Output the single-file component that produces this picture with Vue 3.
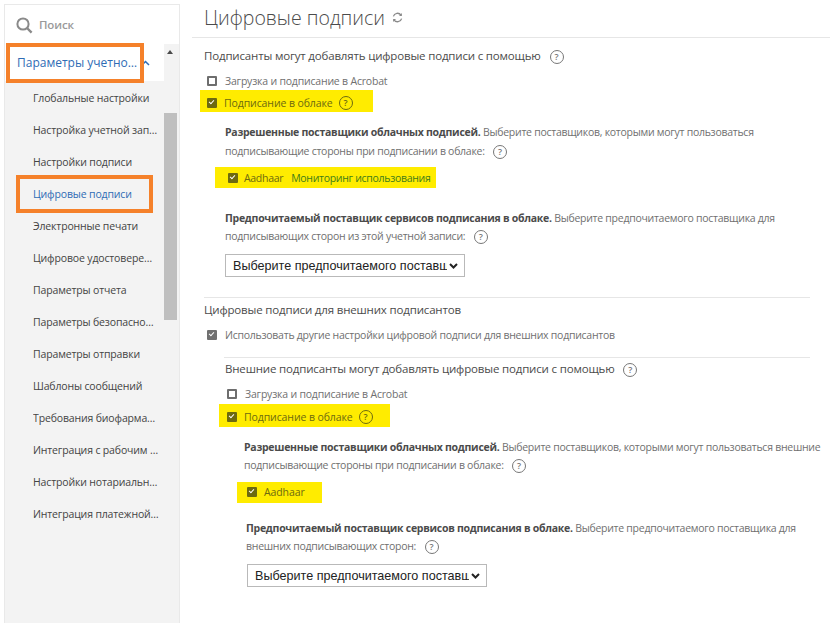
<script setup>
const navItems = [
  { label: 'Глобальные настройки' },
  { label: 'Настройка учетной записи' },
  { label: 'Настройки подписи' },
  { label: 'Цифровые подписи', active: true },
  { label: 'Электронные печати' },
  { label: 'Цифровое удостоверение', w: 125 },
  { label: 'Параметры отчета' },
  { label: 'Параметры безопасности', w: 125 },
  { label: 'Параметры отправки' },
  { label: 'Шаблоны сообщений' },
  { label: 'Требования биофармацевтики', w: 127 },
  { label: 'Интеграция с рабочим процессом' },
  { label: 'Настройки нотариальных услуг' },
  { label: 'Интеграция платежной системы', w: 127 }
]
</script>

<template>
  <div class="page">
    <aside class="sidebar">
      <div class="search">
        <svg class="search-icon" width="17" height="17" viewBox="0 0 17 17" fill="none" stroke="#8a8a8a">
          <circle cx="7" cy="7" r="5.6" stroke-width="2" />
          <path d="M11 11l4.6 4.6" stroke-width="2.4" />
        </svg>
        <span>Поиск</span>
      </div>
      <div class="nav-area">
        <div class="nav-list">
          <div class="nav-head">
            <span class="nav-head-text">Параметры учетной записи</span>
            <svg class="chev" width="9" height="6" viewBox="0 0 9 6" fill="none" stroke="#2f6cb5" stroke-width="1.5"><path d="M1 5l3.5-3.5L8 5" /></svg>
          </div>
          <div v-for="item in navItems" :key="item.label" class="nav-item" :class="{ active: item.active }" :style="item.w ? { width: item.w + 'px' } : null">{{ item.label }}</div>
        </div>
        <div class="scrollbar">
          <div class="scroll-arrow"></div>
          <div class="scroll-thumb"></div>
        </div>
      </div>
      <div class="mark mark-head"></div>
      <div class="mark mark-item"></div>
    </aside>

    <main class="main">
      <header class="title-bar">
        <h1>Цифровые подписи</h1>
        <svg width="11" height="11" viewBox="0 0 11 11" fill="none" stroke="#8a8a8a" stroke-width="1.3">
          <path d="M1.4 4.4A4.2 4.2 0 0 1 9 3.2" />
          <path d="M9.6 6.6A4.2 4.2 0 0 1 2 7.8" />
          <path d="M9.9 1v3H7z" fill="#8a8a8a" stroke="none" />
          <path d="M1.1 10V7h2.9z" fill="#8a8a8a" stroke="none" />
        </svg>
      </header>

      <section class="section">
        <div class="line heading h1st">Подписанты могут добавлять цифровые подписи с помощью <span class="help">?</span></div>
        <label class="line check c1"><span class="box"></span>Загрузка и подписание в Acrobat</label>
        <div class="hl hl-a"><span class="box on"></span>Подписание в облаке <span class="help">?</span></div>
        <p class="para p1"><b>Разрешенные поставщики облачных подписей.</b> Выберите поставщиков, которыми могут пользоваться<br />подписывающие стороны при подписании в облаке: <span class="help">?</span></p>
        <div class="hl hl-b"><span class="box on"></span>Aadhaar<span class="hl-link">Мониторинг использования</span></div>
        <p class="para p2"><b>Предпочитаемый поставщик сервисов подписания в облаке.</b> Выберите предпочитаемого поставщика для<br />подписывающих сторон из этой учетной записи: <span class="help">?</span></p>
        <select class="picker s1"><option>Выберите предпочитаемого поставщика</option></select>
      </section>

      <hr class="rule r1" />

      <section class="section">
        <div class="line heading h2nd">Цифровые подписи для внешних подписантов</div>
        <label class="line check c2"><span class="box on grey"></span>Использовать другие настройки цифровой подписи для внешних подписантов</label>
        <hr class="rule r2" />
        <div class="line heading h3rd">Внешние подписанты могут добавлять цифровые подписи с помощью <span class="help">?</span></div>
        <label class="line check c3"><span class="box"></span>Загрузка и подписание в Acrobat</label>
        <div class="hl hl-c"><span class="box on"></span>Подписание в облаке <span class="help">?</span></div>
        <p class="para p3"><b>Разрешенные поставщики облачных подписей.</b> Выберите поставщиков, которыми могут пользоваться внешние<br />подписывающие стороны при подписании в облаке: <span class="help">?</span></p>
        <div class="hl hl-d"><span class="box on"></span>Aadhaar</div>
        <p class="para p4"><b>Предпочитаемый поставщик сервисов подписания в облаке.</b> Выберите предпочитаемого поставщика для<br />внешних подписывающих сторон: <span class="help">?</span></p>
        <select class="picker s2"><option>Выберите предпочитаемого поставщика</option></select>
      </section>
    </main>
  </div>
</template>

<style scoped>
.page {
  position: relative;
  display: flex;
  width: 830px;
  height: 623px;
  overflow: hidden;
  background: #fff;
  font-family: "Open Sans", "Noto Sans", sans-serif;
  font-size: 10.5px;
  letter-spacing: -0.1px;
  color: #707070;
}
.sidebar {
  position: relative;
  flex: none;
  width: 174px;
  height: 619px;
  margin: 4px 0 0 4px;
  border: 1px solid #e9e9e9;
  border-bottom: 0;
  background: #f3f3f3;
}
.search {
  display: flex;
  align-items: center;
  gap: 6px;
  height: 39px;
  padding-left: 11px;
  background: #fff;
  color: #9a9a9a;
  font-size: 11.5px;
  font-weight: 600;
}
.search-icon { margin-top: 2px; }
.nav-area { display: flex; }
.nav-list { width: 159px; flex: none; }
.nav-head {
  display: flex;
  align-items: center;
  height: 37px;
  margin-bottom: 1px;
  padding-left: 12px;
  background: #fff;
  color: #2f6cb5;
  font-size: 12px;
  letter-spacing: 0;
}
.nav-head-text {
  width: 124px;
  overflow: hidden;
  white-space: nowrap;
  text-overflow: ellipsis;
}
.nav-item {
  height: 32px;
  line-height: 32px;
  margin-left: 28px;
  width: 130px;
  overflow: hidden;
  white-space: nowrap;
  text-overflow: ellipsis;
  color: #444;
  font-size: 10.5px;
  letter-spacing: -0.15px;
}
.nav-item.active { color: #2f6cb5; }
.scrollbar { width: 13px; flex: none; }
.scroll-arrow {
  width: 0;
  height: 0;
  margin: 6px 0 0 3px;
  border: 3.5px solid transparent;
  border-top: 0;
  border-bottom: 4px solid #4a4a4a;
}
.scroll-thumb {
  height: 207px;
  margin-top: 59px;
  background: #bfbfbf;
}
.mark {
  position: absolute;
  box-sizing: border-box;
  border: 4px solid #f5812a;
}
.mark-head { left: 1px; top: 38px; width: 138px; height: 40px; }
.mark-item { left: 11px; top: 170px; width: 137px; height: 38px; }

.main { flex: 1; min-width: 0; }
.title-bar {
  display: flex;
  align-items: center;
  gap: 7px;
  height: 34px;
  padding-bottom: 3px;
  margin-left: 12px;
  padding-left: 12px;
  border-bottom: 1px solid #e6e6e6;
}
h1 {
  margin: 0;
  font-size: 19.5px;
  font-weight: 300;
  letter-spacing: 0;
  color: #4b4b4b;
}
.section { margin-left: 24px; }
.line { display: block; line-height: 18px; white-space: nowrap; }
.heading { font-size: 11.5px; letter-spacing: -0.17px; color: #4b4b4b; }
.check { display: flex; align-items: center; padding-left: 3px; letter-spacing: -0.2px; }
.box {
  flex: none;
  box-sizing: border-box;
  position: relative;
  display: inline-block;
  width: 10px;
  height: 10px;
  margin-right: 8px;
  border: 2px solid #6e6e6e;
  border-radius: 1px;
  background: #fff;
}
.box.on { background: #6d6a10; border-color: #6d6a10; }
.box.grey { background: #707070; border-color: #707070; }
.box.on::after {
  content: "";
  position: absolute;
  left: 1px;
  top: -1px;
  width: 2px;
  height: 4px;
  border: solid #fff;
  border-width: 0 1.4px 1.4px 0;
  transform: rotate(42deg);
}
.help {
  display: inline-block;
  box-sizing: border-box;
  width: 14px;
  height: 14px;
  margin: -4px 0 -4px 6px;
  border: 1.3px solid #777;
  border-radius: 50%;
  color: #777;
  font-size: 9px;
  font-weight: 600;
  line-height: 11.5px;
  letter-spacing: 0;
  text-align: center;
  vertical-align: middle;
}
.hl {
  display: flex;
  align-items: center;
  width: fit-content;
  height: 18px;
  background: #ffec00;
  color: #6d6a10;
  white-space: nowrap;
  box-sizing: content-box;
}
.hl .help { border-color: #6d6a10; color: #6d6a10; margin-top: 0; margin-bottom: 0; }
.hl .box { margin-right: 7px; }
.hl-link { margin-left: 8px; color: #3f7d1a; }
.hl-a { margin: 0 0 0 -4px; padding: 4px 20px 0 7px; }
.hl-b { margin: 6px 0 0 11px; padding: 2px 6px 1px 13px; letter-spacing: -0.3px; }
.hl-b .box { margin-right: 6px; }
.hl-c { margin: 1px 0 0 15px; padding: 4px 17px 1px 8px; }
.hl-d { margin: 8px 0 0 33px; padding: 1px 17px 2px 10px; }
.para {
  margin: 0;
  line-height: 18px;
  letter-spacing: -0.27px;
  white-space: nowrap;
}
.para b { font-weight: 700; color: #4b4b4b; }
.picker {
  display: block;
  box-sizing: border-box;
  width: 240px;
  height: 23px;
  padding: 0 17px 0 7px;
  border: 1px solid #b9b9b9;
  border-radius: 0;
  appearance: none;
  background: #fff url("data:image/svg+xml,%3Csvg xmlns='http://www.w3.org/2000/svg' width='9' height='6'%3E%3Cpath d='M1 1l3.5 3.5L8 1' fill='none' stroke='%23222' stroke-width='2'/%3E%3C/svg%3E") no-repeat right 6px center;
  color: #222;
  font-family: "Liberation Sans", Arial, sans-serif;
  font-size: 12.6px;
  letter-spacing: 0;
}
.rule {
  height: 1px;
  margin: 0;
  border: 0;
  background: #e6e6e6;
}
.h1st { margin-top: 9px; }
.c1 { margin-top: 7px; }
.p1 { margin: 11px 0 0 21px; line-height: 19px; }
.p2 { margin: 21px 0 0 21px; }
.s1 { margin: 9px 0 0 21px; }
.r1 { margin: 20px 20px 0 24px; }
.h2nd { margin-top: 3px; }
.c2 { margin-top: 7px; letter-spacing: -0.26px; }
.r2 { margin: 13px 20px 0 20px; }
.h3rd { margin: 2px 0 0 21px; }
.c3 { margin: 7px 0 0 20px; }
.p3 { margin: 11px 0 0 40px; }
.p4 { margin: 16px 0 0 42px; }
.s2 { margin: 9px 0 0 43px; }
</style>
